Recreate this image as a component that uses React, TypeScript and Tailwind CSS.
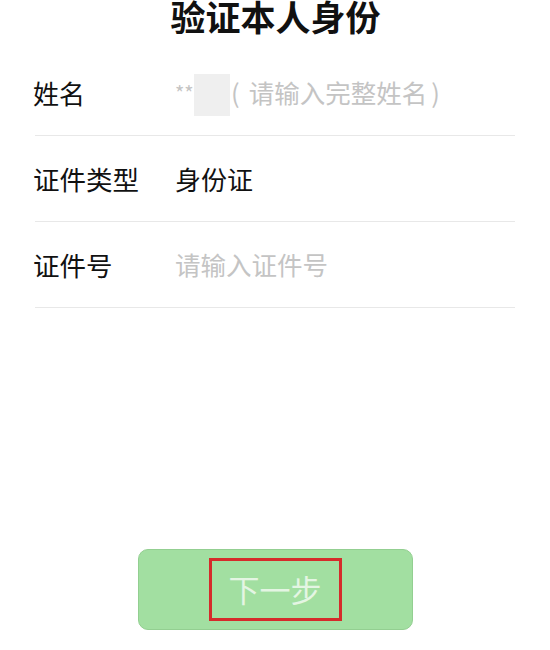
import React from "react";

const font = { fontFamily: '"Noto Sans CJK SC", "Noto Sans", sans-serif' };

export default function App() {
  return (
    <div className="w-[550px] h-[650px] bg-white overflow-hidden" style={font}>
      <h1 className="text-center text-[35px] leading-[36px] font-bold text-[#111] -mt-[2px] pl-[1px]">
        验证本人身份
      </h1>
      <div className="px-[35px] mt-[16px]">
        <div className="relative flex items-center h-[86px] border-b border-[#e8e8e8]">
          <span className="w-[142px] -ml-[2px] pl-[0px] text-[26px] text-[#111]">姓名</span>
          <span className="flex items-center text-[#c4c4c4]">
            <span className="inline-block w-[56px] text-[20px]">**</span>
            <span className="text-[25.5px]">(</span>
            <span className="ml-[9px] text-[25.5px]">请输入完整姓名</span>
            <span className="ml-[4px] text-[25.5px]">)</span>
          </span>
          <span className="absolute left-[159px] top-[24px] w-[36px] h-[42px] bg-[#efefef]" />
        </div>
        <div className="flex items-center h-[86px] border-b border-[#e8e8e8]">
          <span className="w-[142px] -ml-[2px] text-[26.5px] text-[#111]">证件类型</span>
          <span className="text-[26px] text-[#111]">身份证</span>
        </div>
        <div className="flex items-center h-[86px] border-b border-[#e8e8e8]">
          <span className="w-[142px] -ml-[2px] text-[26.5px] text-[#111]">证件号</span>
          <span className="text-[25.5px] text-[#c4c4c4]">请输入证件号</span>
        </div>
      </div>
      <div className="flex justify-center mt-[241px]">
        <div className="w-[275px] h-[81px] rounded-[10px] bg-[#a2dfa1] border border-[#93cf91] flex items-center justify-center">
          <div className="w-[133px] h-[63px] border-[3px] border-[#d52b2b] flex items-center justify-center text-[31px] text-[#e4f5e3]">
            下一步
          </div>
        </div>
      </div>
    </div>
  );
}
